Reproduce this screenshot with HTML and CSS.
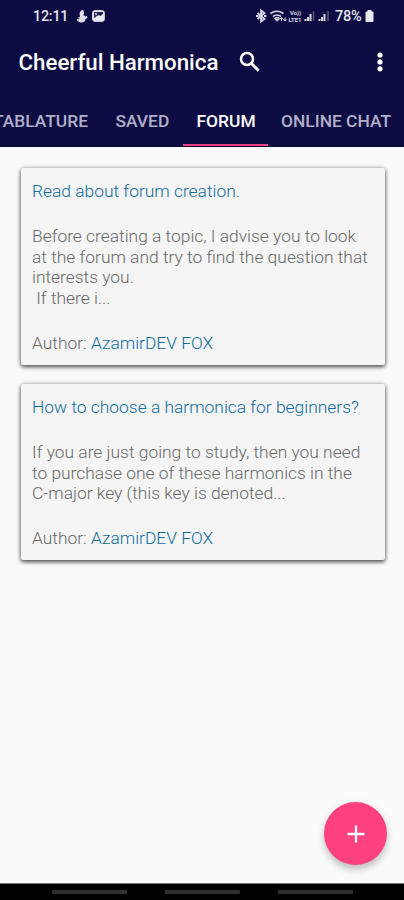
FILE: index.html
```
<!DOCTYPE html>
<html lang="en">
<head>
<meta charset="utf-8">
<title>Cheerful Harmonica</title>
<link rel="stylesheet" href="styles.css">
</head>
<body>
<header class="header">
  <div class="status">
    <span class="clock">12:11</span>
    <svg class="note" width="12" height="14" viewBox="0 0 12 14"><path d="M5 1.500l2-.5 1 2-.5 3 2 1.500L11 7l.5 2-2 1-.5 2-2.500 1.500H4L1 11.500V10l2.500.5L2 8.500 4 8 3.500 4z" fill="#dddde8"/></svg>
    <svg class="photo" width="13" height="12" viewBox="0 0 13 12"><rect x=".7" y=".7" width="11.600" height="10.600" rx="2" fill="#e8e8f0" stroke="#e8e8f0"/><path d="M2 2h9v2L8.500 6 6.500 5 2 8z" fill="#24234f"/><circle cx="4" cy="4" r="1" fill="#e8e8f0"/></svg>
    <span class="spacer"></span>
    <svg class="signals" width="75" height="16" viewBox="0 0 75 16" fill="none" stroke="#d8d8e4">
      <path d="M1.500 5l7 6-3.500 2.500v-11L8.500 5l-7 6M0 8h2.500m5.500 0h2.500" stroke-width="1.800"/>
      <path d="M14.500 5.500q6.500-4.500 13 0M17 8.500q4-3 8 0M19 10.500q2-2 4 0l-2 2z" stroke-width="1.600"/>
      <path d="M25.500 13V9.500m-1.500 2l1.500-2 1.500 2M29 9.500V13m-1.500-2l1.500 2 1.500-2" stroke-width="1"/>
      <text class="carrier" x="34" y="7.300" textLength="11">Vo))</text>
      <text class="carrier" x="32.500" y="13.500" textLength="13">LTE1</text>
      <path d="M49.500 13v-2M52 13V9M54.500 13V6M63.500 13v-2M66 13V9M68.500 13V6" stroke-width="2"/>
      <path d="M57.500 13V3M72 13V3" stroke="#56557d" stroke-width="1.500"/>
    </svg>
    <span class="percent">78%</span>
    <svg class="battery" width="9" height="12" viewBox="0 0 9 12"><path d="M2.500 0h4v1.500h1q1 0 1 1V11q0 1-1 1h-6q-1 0-1-1V2.500q0-1 1-1h1z" fill="#e8e8f0"/></svg>
  </div>
  <div class="toolbar">
    <h1 class="title">Cheerful Harmonica</h1>
    <svg class="search" width="22" height="22" viewBox="0 0 22 22" fill="none" stroke="#fff"><circle cx="8" cy="8" r="6" stroke-width="2.500"/><path d="M12.500 12.500l7.200 7.200" stroke-width="3"/></svg>
    <svg class="more" width="8" height="20" viewBox="0 0 8 20" fill="#fff"><circle cx="4" cy="3" r="2.600"/><circle cx="4" cy="9.900" r="2.600"/><circle cx="4" cy="16.800" r="2.600"/></svg>
  </div>
  <nav class="tabs">
    <span class="tab tab-first">TABLATURE</span>
    <span class="tab tab-saved">SAVED</span>
    <span class="tab tab-active">FORUM</span>
    <span class="tab tab-chat">ONLINE CHAT</span>
  </nav>
</header>
<main class="content">
  <article class="card card-tall">
    <h2 class="topic">Read about forum creation.</h2>
    <p class="excerpt">Before creating a topic, I advise you to look<br>at the forum and try to find the question that<br>interests you.<br>&nbsp;If there i...</p>
    <p class="author">Author: <a class="name">AzamirDEV FOX</a></p>
  </article>
  <article class="card">
    <h2 class="topic">How to choose a harmonica for beginners?</h2>
    <p class="excerpt">If you are just going to study, then you need<br>to purchase one of these harmonics in the<br>C-major key (this key is denoted...</p>
    <p class="author">Author: <a class="name">AzamirDEV FOX</a></p>
  </article>
  <button class="fab" aria-label="Add topic"><svg width="18" height="18" viewBox="0 0 18 18"><path d="M9 .5v17M.5 9h17" stroke="#fff" stroke-width="2.300"/></svg></button>
</main>
<footer class="navbar"><i class="handle"></i><i class="handle"></i><i class="handle"></i></footer>
</body>
</html>
```
FILE: styles.css
```
* { box-sizing: border-box; margin: 0; padding: 0; }
body {
  width: 404px; height: 900px; overflow: hidden;
  display: flex; flex-direction: column;
  background: #fafafa; color: #686868;
  font-family: Roboto, sans-serif;
}
.header { height: 147px; flex: none; background: #0d0c42; color: #fff; overflow: hidden; border-bottom: 1px solid #08072f; }
.status { height: 32px; display: flex; align-items: center; padding: 0 30px 0 33px; color: #e4e4ee; }
.clock { width: 36px; margin-right: 7px; font-size: 14.300px; font-weight: 500; letter-spacing: -.2px; white-space: nowrap; }
.note { margin-right: 4px; }
.spacer { flex: 1; }
.signals { margin-right: 4px; }
.carrier { font: bold 6px Roboto, sans-serif; fill: #d8d8e4; stroke: none; }
.percent { width: 28px; font-size: 14.500px; font-weight: 500; letter-spacing: -.3px; }
.battery { margin-left: 2px; }
.toolbar { height: 60px; display: flex; align-items: center; padding: 0 20px 0 18.500px; }
.title { width: 220.500px; font-size: 22.300px; font-weight: 500; white-space: nowrap; }
.more { margin-left: auto; }
.tabs { height: 55px; display: flex; white-space: nowrap; font-size: 17.400px; font-weight: 500; line-height: 58px; color: #b1b0c8; }
.tab { flex: none; height: 54px; }
.tab-first { width: 102px; display: flex; justify-content: flex-end; padding-right: 14px; }
.tab-saved { width: 81px; padding-left: 13.500px; }
.tab-active { width: 85px; padding-left: 13.500px; color: #fff; border-bottom: 2px solid #f53e88; }
.tab-chat { padding-left: 13px; }
.content { flex: 1; position: relative; display: flex; flex-direction: column; gap: 19px; padding: 21px 19px 0 21px; }
.card {
  height: 176px; padding: 13px 11px; border-radius: 2px; background: #f5f5f5;
  box-shadow: 0 2px 4px rgba(0,0,0,.65), 0 0 4px rgba(0,0,0,.25);
  font-size: 17.400px; font-weight: 300; line-height: 20.400px; white-space: nowrap;
}
.card-tall { height: 197px; }
.topic { font-size: inherit; font-weight: inherit; color: #0d6b9e; }
.excerpt { margin: 25px 0 24.500px; }
.name { color: #0d6b9e; }
.fab {
  position: absolute; left: 324px; top: 655px; width: 63px; height: 63px;
  display: flex; align-items: center; justify-content: center;
  border: 0; border-radius: 50%; background: #ff4081;
  box-shadow: 0 5px 7px rgba(0,0,0,.2), 0 1px 9px rgba(0,0,0,.06);
}
.navbar { height: 17px; flex: none; display: flex; gap: 38px; padding: 6px 0 0 52px; background: #000; border-top: 1px solid #777; }
.handle { width: 75px; height: 4px; border-radius: 1px; background: #303030; }
```
